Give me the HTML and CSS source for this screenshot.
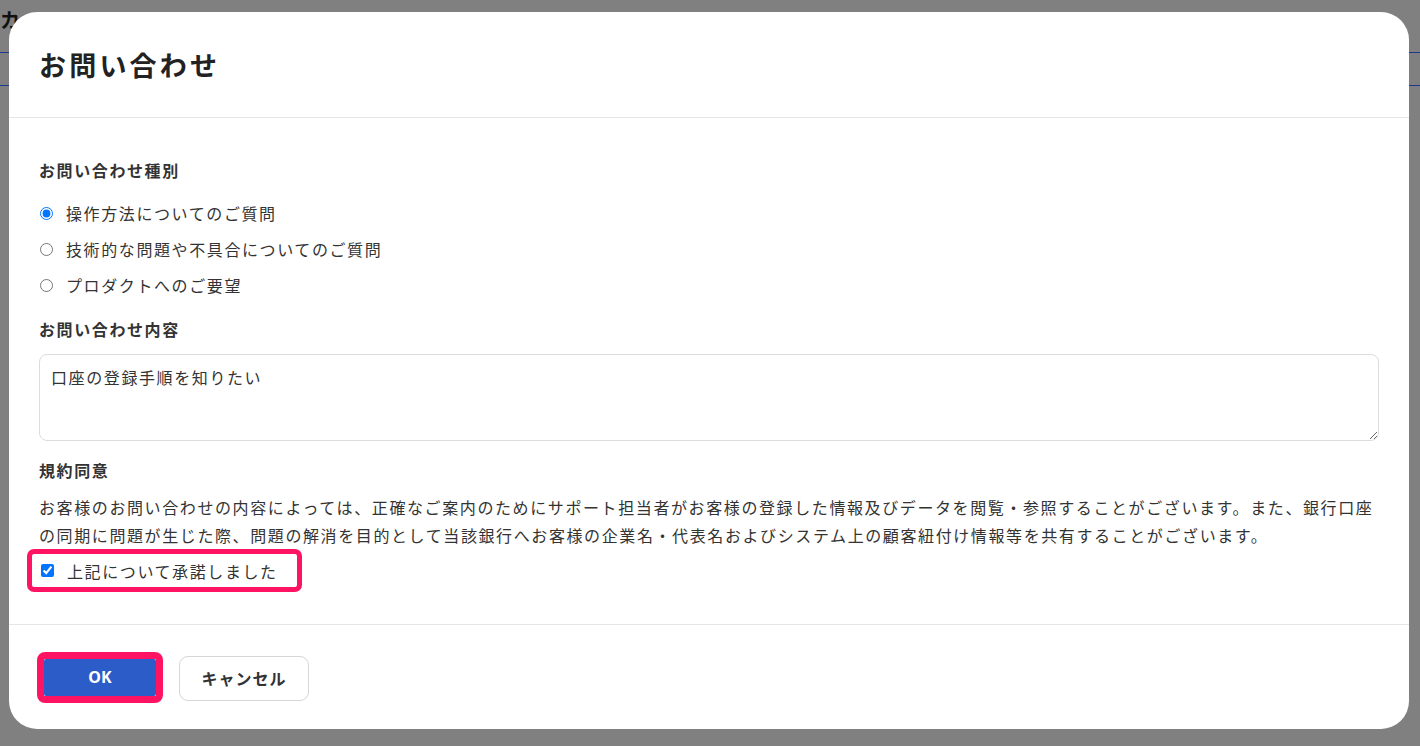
FILE: index.html
```html
<!DOCTYPE html>
<html>
<head>
  <meta charset="utf-8">
  <link rel="stylesheet" href="styles.css">
</head>
<body>
  <div class="page">
    <div class="page-top">カ</div>
    <div class="page-tabs"></div>
  </div>

  <div class="modal">
    <div class="modal-header">
      <h1>お問い合わせ</h1>
    </div>

    <div class="modal-body">
      <div class="field-label">お問い合わせ種別</div>
      <label class="radio-row">
        <input type="radio" name="kind" checked>
        <span>操作方法についてのご質問</span>
      </label>
      <label class="radio-row">
        <input type="radio" name="kind">
        <span>技術的な問題や不具合についてのご質問</span>
      </label>
      <label class="radio-row">
        <input type="radio" name="kind">
        <span>プロダクトへのご要望</span>
      </label>

      <div class="field-label gap-top">お問い合わせ内容</div>
      <textarea class="message">口座の登録手順を知りたい</textarea>

      <div class="field-label gap-top-lg">規約同意</div>
      <p class="terms">お客様のお問い合わせの内容によっては、正確なご案内のためにサポート担当者がお客様の登録した情報及びデータを閲覧・参照することがございます。また、銀行口座の同期に問題が生じた際、問題の解消を目的として当該銀行へお客様の企業名・代表名およびシステム上の顧客紐付け情報等を共有することがございます。</p>

      <label class="agree highlight">
        <input type="checkbox" checked>
        <span>上記について承諾しました</span>
      </label>
    </div>

    <div class="modal-footer">
      <div class="ok-wrap highlight">
        <button class="btn-ok">OK</button>
      </div>
      <button class="btn-cancel">キャンセル</button>
    </div>
  </div>
</body>
</html>
```

FILE: styles.css
```css
* {
  margin: 0;
  padding: 0;
  box-sizing: border-box;
}

body {
  width: 1420px;
  height: 746px;
  overflow: hidden;
  background: #808080;
  font-family: "Noto Sans CJK JP", "Noto Sans", sans-serif;
  color: #333;
  position: relative;
}

/* page behind the overlay (already dimmed) */
.page-top {
  height: 53px;
  border-bottom: 1px solid #1b3a8c;
  padding: 8px 0 0 0;
  font-size: 20px;
  font-weight: 700;
  line-height: 24px;
  color: #111;
}

.page-tabs {
  height: 33px;
  border-bottom: 1px solid #1b3a8c;
}

.modal {
  position: absolute;
  left: 9px;
  top: 12px;
  width: 1400px;
  height: 717px;
  background: #fff;
  border-radius: 28px;
  display: flex;
  flex-direction: column;
  letter-spacing: 1.6px;
}

.modal-header {
  height: 106px;
  padding: 0 30px;
  display: flex;
  align-items: center;
  border-bottom: 1px solid #e6e6e6;
}

.modal-header h1 {
  font-size: 27px;
  font-weight: 700;
  color: #222;
  letter-spacing: 3.2px;
}

.modal-body {
  flex: 1;
  padding: 40px 30px 0;
  border-bottom: 1px solid #e6e6e6;
}

.field-label {
  font-size: 16px;
  font-weight: 700;
  line-height: 24px;
  margin-bottom: 13px;
  color: #333;
}

.field-label.gap-top {
  margin-top: 14px;
}

.field-label.gap-top-lg {
  margin-top: 17px;
  margin-bottom: 11px;
}

.radio-row {
  display: flex;
  align-items: center;
  height: 36px;
  font-size: 16px;
}

.radio-row input,
.agree input {
  width: 13px;
  height: 13px;
  margin: 0 13px 0 1px;
  accent-color: #0075ff;
}

.message {
  display: block;
  width: 100%;
  height: 87px;
  border: 1px solid #dcdcdc;
  border-radius: 8px;
  padding: 10px 11px;
  font-family: inherit;
  font-size: 16px;
  line-height: 24px;
  letter-spacing: 1.6px;
  color: #333;
  outline: none;
}

.terms {
  font-size: 16px;
  line-height: 28px;
}

.highlight {
  border: 5px solid #ff1464;
  border-radius: 7px;
}

.agree {
  display: inline-flex;
  align-items: center;
  height: 43px;
  margin-left: -12px;
  padding: 0 19px 0 8px;
  font-size: 16px;
}

.modal-footer {
  height: 104px;
  padding: 0 28px;
  display: flex;
  align-items: center;
  gap: 16px;
}

.ok-wrap {
  border-width: 7px;
  border-radius: 8px;
  display: flex;
}

.btn-ok {
  width: 112px;
  height: 37px;
  border: none;
  border-radius: 2px;
  background: #2b5cc8;
  color: #fff;
  font-family: "Noto Sans", sans-serif;
  font-size: 16px;
  font-weight: 700;
}

.btn-cancel {
  width: 130px;
  height: 45px;
  margin-top: 2px;
  background: #fff;
  border: 1px solid #d6d6d6;
  border-radius: 9px;
  font-family: inherit;
  font-size: 16px;
  font-weight: 700;
  color: #333;
  letter-spacing: 1px;
}
```
